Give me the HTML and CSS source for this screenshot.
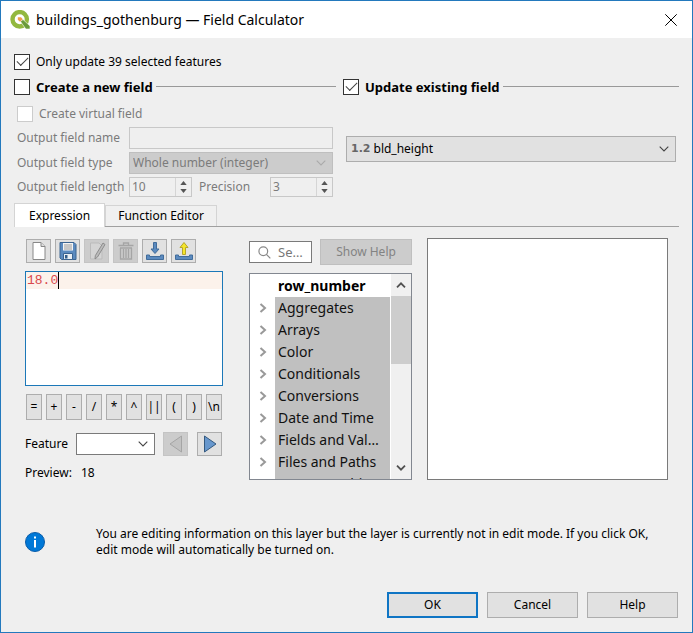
FILE: index.html
```html
<!DOCTYPE html>
<html lang="en">
<head>
<meta charset="utf-8">
<title>buildings_gothenburg — Field Calculator</title>
<link rel="stylesheet" href="styles.css">
</head>
<body>
<svg class="defs" aria-hidden="true">
  <symbol id="chev-down" viewBox="0 0 10 6"><path d="M.7 .7L5 5L9.300 .7" fill="none" stroke="currentColor" stroke-width="1.100"/></symbol>
  <symbol id="chev-right" viewBox="0 0 8 10"><path d="M1.500 1L6 5L1.500 9" fill="none" stroke="currentColor" stroke-width="2"/></symbol>
  <symbol id="spin-up" viewBox="0 0 8 5"><path d="M0 5L4 0L8 5Z" fill="currentColor"/></symbol>
  <symbol id="spin-down" viewBox="0 0 8 5"><path d="M0 0L4 5L8 0Z" fill="currentColor"/></symbol>
</svg>
<main class="dialog">
  <header class="titlebar">
    <svg class="logo" viewBox="0 0 20 20" aria-hidden="true">
      <circle cx="9.700" cy="9.300" r="7.200" fill="none" stroke="#93b83f" stroke-width="4.400"/>
      <path d="M10.500 11.500L13 9.500L20 16V19H15.800Z" fill="#6a9a3a" stroke="#fff" stroke-width=".6"/>
      <path d="M7.800 7.300H11L12.800 9.200L10 11.800L7.800 9.800Z" fill="#efa04a"/>
    </svg>
    <h1 class="title">buildings_gothenburg — Field Calculator</h1>
    <button class="close" type="button" aria-label="Close"><svg viewBox="0 0 12 12"><path d="M.3 .3L11.700 11.700M11.700 .3L.3 11.700" stroke="#000"/></svg></button>
  </header>

  <form class="body">
    <label class="check"><input type="checkbox" checked>Only update 39 selected features</label>

    <div class="groups">
      <section class="group">
        <div class="group-head"><label class="check strong"><input type="checkbox">Create a new field</label></div>
        <div class="group-body fields">
          <label class="check virtual"><input type="checkbox" disabled>Create virtual field</label>
          <label for="name">Output field name</label>
          <input class="text wide" id="name" type="text" disabled>
          <label for="type">Output field type</label>
          <span class="combo off wide"><select id="type" disabled><option>Whole number (integer)</option></select><svg class="arrow"><use href="#chev-down"/></svg></span>
          <label for="length">Output field length</label>
          <span class="spin"><input id="length" type="text" value="10" disabled><span class="steps"><button type="button" disabled aria-label="Increase length"><svg><use href="#spin-up"/></svg></button><button type="button" disabled aria-label="Decrease length"><svg><use href="#spin-down"/></svg></button></span></span>
          <label for="precision">Precision</label>
          <span class="spin"><input id="precision" type="text" value="3" disabled><span class="steps"><button type="button" disabled aria-label="Increase precision"><svg><use href="#spin-up"/></svg></button><button type="button" disabled aria-label="Decrease precision"><svg><use href="#spin-down"/></svg></button></span></span>
        </div>
      </section>
      <section class="group">
        <div class="group-head"><label class="check strong"><input type="checkbox" checked>Update existing field</label></div>
        <div class="group-body existing">
          <span class="combo typed"><span class="tag">1.2</span><select aria-label="Existing field"><option>bld_height</option></select><svg class="arrow"><use href="#chev-down"/></svg></span>
        </div>
      </section>
    </div>

    <div class="tabs" role="tablist">
      <button class="tab active" type="button" role="tab" aria-selected="true">Expression</button>
      <button class="tab" type="button" role="tab" aria-selected="false">Function Editor</button>
    </div>

    <div class="pane">
      <section class="editor">
        <div class="toolbar">
          <button type="button" aria-label="New expression"><svg viewBox="0 0 20 20"><path d="M4 1.500H12L16 5.500V18.500H4Z" fill="#fff" stroke="#888"/><path d="M12 1.500V5.500H16" fill="#ddd" stroke="#888"/></svg></button>
          <button type="button" aria-label="Save expression"><svg viewBox="0 0 20 20"><path d="M2 1.500H16L18 3.500V18.500H3.500L2 17Z" fill="#5b8abf" stroke="#3b6491"/><path d="M5 2H15V9.500H5Z" fill="#f4f4f4"/><path d="M6 4H14M6 6H14M6 8H14" stroke="#999"/><path d="M5.500 12.500H14.500V18.500H5.500Z" fill="#e8edf2" stroke="#3b6491"/><path d="M7 14H9.500V17.500H7Z" fill="#315c8b"/></svg></button>
          <button type="button" disabled aria-label="Edit expression"><svg viewBox="0 0 20 20"><path d="M3.500 2H12L15 5V18H3.500Z" fill="#d4d4d4" stroke="#bbb"/><path d="M16 2L18 3.500L10.500 16L8 18L8.300 14.700Z" fill="#bbb" stroke="#8c8c8c"/></svg></button>
          <button type="button" disabled aria-label="Delete expression"><svg viewBox="0 0 20 20" fill="none" stroke="#a5a5a5" stroke-width="1.300"><path d="M2.500 4.500H17.500M7.500 4V2H12.500V4M4.500 7V18H15.500V7M4 7H16M7.500 8V17M10 8V17M12.500 8V17"/></svg></button>
          <button type="button" aria-label="Import expressions"><svg viewBox="0 0 20 20"><path d="M8.500 1.500H11.500V8H14L10 12.500L6 8H8.500Z" fill="#5b8abf" stroke="#416c9b"/><path d="M1.500 14H4.500V15.500H15.500V14H18.500V18.500H1.500Z" fill="#5b8abf" stroke="#416c9b"/></svg></button>
          <button type="button" aria-label="Export expressions"><svg viewBox="0 0 20 20"><path d="M1.500 14H4.500V15.500H15.500V14H18.500V18.500H1.500Z" fill="#5b8abf" stroke="#416c9b"/><path d="M8.500 13.500H11.500V6.500H14L10 1.500L6 6.500H8.500Z" fill="#f4e52b" stroke="#b4a52b"/></svg></button>
        </div>
        <div class="code" role="textbox" tabindex="0" aria-label="Expression" contenteditable="true" spellcheck="false"><div class="line">18.0<i class="caret"></i></div></div>
        <div class="operators">
          <button type="button">=</button><button type="button">+</button><button type="button">-</button><button type="button">/</button><button type="button">*</button><button type="button">^</button><button type="button">||</button><button type="button">(</button><button type="button">)</button><button type="button">\n</button>
        </div>
        <div class="feature">
          <label for="feature">Feature</label>
          <span class="combo plain"><select id="feature"><option></option></select><svg class="arrow"><use href="#chev-down"/></svg></span>
          <button class="step" type="button" disabled aria-label="Previous feature"><svg viewBox="0 0 14 18"><path d="M12.500 1V17L1 9Z" fill="#c2c2c2" stroke="#a5a5a5"/></svg></button>
          <button class="step next" type="button" aria-label="Next feature"><svg viewBox="0 0 14 18"><path d="M1.500 1V17L13 9Z" fill="#6797cd" stroke="#34597f"/></svg></button>
        </div>
        <p class="preview"><span>Preview:</span><span>18</span></p>
      </section>

      <section class="functions">
        <div class="finder">
          <label class="search"><svg viewBox="0 0 14 14" fill="none" stroke="#888" stroke-width="1.300"><circle cx="5.700" cy="5.700" r="4.700"/><path d="M9 9L13.300 13.300"/></svg><input type="text" placeholder="Search" aria-label="Search"></label>
          <button class="show-help" type="button" disabled>Show Help</button>
        </div>
        <div class="tree">
          <ul class="items">
            <li class="leaf"><span>row_number</span></li>
            <li><svg><use href="#chev-right"/></svg><span>Aggregates</span></li>
            <li><svg><use href="#chev-right"/></svg><span>Arrays</span></li>
            <li><svg><use href="#chev-right"/></svg><span>Color</span></li>
            <li><svg><use href="#chev-right"/></svg><span>Conditionals</span></li>
            <li><svg><use href="#chev-right"/></svg><span>Conversions</span></li>
            <li><svg><use href="#chev-right"/></svg><span>Date and Time</span></li>
            <li><svg><use href="#chev-right"/></svg><span>Fields and Values</span></li>
            <li><svg><use href="#chev-right"/></svg><span>Files and Paths</span></li>
            <li><svg><use href="#chev-right"/></svg><span>Fuzzy Matching</span></li>
          </ul>
          <div class="scroll" aria-hidden="true">
            <svg viewBox="0 0 10 6"><path d="M1 5.300L5 1.300L9 5.300" fill="none" stroke="#505050" stroke-width="1.800"/></svg>
            <div class="track"><div class="thumb"></div></div>
            <svg viewBox="0 0 10 6"><path d="M1 .7L5 4.700L9 .7" fill="none" stroke="#505050" stroke-width="1.800"/></svg>
          </div>
        </div>
      </section>

      <section class="help" aria-label="Function help"></section>
    </div>

    <div class="notice">
      <svg viewBox="0 0 20 20" aria-hidden="true"><circle cx="10" cy="10" r="9.500" fill="#0078d7" stroke="#0a5ca8"/><path d="M9 4.500H11V6.500H9ZM9 8H11V15.500H9Z" fill="#fff"/></svg>
      <p>You are editing information on this layer but the layer is currently not in edit mode. If you click OK, edit mode will automatically be turned on.</p>
    </div>

    <footer class="actions">
      <button class="primary" type="button">OK</button>
      <button type="button">Cancel</button>
      <button type="button">Help</button>
    </footer>
  </form>
</main>
</body>
</html>
```
FILE: styles.css
```css
* { box-sizing: border-box; }
body { margin: 0; font: 12px/16px "Noto Sans", sans-serif; color: #000; }
button, input, select { font: inherit; color: inherit; margin: 0; padding: 0; border-radius: 0; }
h1, p, ul { margin: 0; padding: 0; font-weight: normal; }
svg { display: block; flex: none; }
.defs { position: absolute; width: 0; height: 0; }

.dialog { display: flex; flex-direction: column; min-height: 100vh; border: 1px solid #2379bd; background: #efefef; }
.titlebar { display: flex; align-items: center; height: 37px; padding: 0 14px 0 9px; background: #fff; }
.logo { width: 20px; height: 20px; }
.title { flex: 1; margin-left: 6px; font-size: 14px; line-height: 20px; }
.close { width: 14px; height: 14px; padding: 1px; border: 0; background: none; }
.close svg { width: 12px; height: 12px; }

.body { flex: 1; display: flex; flex-direction: column; padding: 15px 13px 14px; }
.check { display: flex; align-items: center; gap: 6px; height: 17px; white-space: nowrap; }
.check input { appearance: none; width: 16px; height: 16px; border: 1px solid #333; background: #fff; display: grid; place-items: center; }
.check input:checked::after { content: ""; width: 10px; height: 5px; margin-bottom: 3px; border: solid #444; border-width: 0 0 1px 1px; transform: rotate(-45deg); }
.check input:disabled { border-color: #ccc; }
.strong { font-size: 13px; font-weight: bold; }

.groups { display: grid; grid-template-columns: 322fr 336fr; gap: 7px; margin-top: 8px; }
.group-head { display: flex; align-items: center; gap: 3px; }
.group-head::after { content: ""; flex: 1; height: 1px; background: #999; }
.group-body { padding: 10px 3px 0; }
.fields { display: grid; grid-template-columns: 112px 63px 78px 1fr; row-gap: 3px; align-items: center; color: #7b7b7b; }
.fields .virtual { grid-column: 1 / -1; margin-bottom: 2px; }
.fields .wide { grid-column: 2 / -1; }
.fields label[for="precision"] { padding-left: 7px; }
.text { height: 22px; border: 1px solid #c8c8c8; background: #efefef; min-width: 0; }
.combo { position: relative; display: flex; align-items: center; height: 22px; border: 1px solid #adadad; background: #e1e1e1; }
.combo select { appearance: none; width: 100%; height: 100%; padding: 0 22px 0 3px; border: 0; background: none; opacity: 1; }
.combo .arrow { position: absolute; right: 6px; width: 10px; height: 6px; pointer-events: none; color: #444; }
.combo.off { background: #ccc; border-color: #bfbfbf; }
.combo.off .arrow { color: #aaa; }
.combo.plain { background: #fff; border-color: #7a7a7a; }
.spin { display: flex; height: 20px; border: 1px solid #c8c8c8; }
.spin input { flex: 1; width: 0; padding-left: 2px; border: 0; background: none; }
.steps { display: flex; flex-direction: column; justify-content: center; gap: 4px; width: 16px; border-left: 1px solid #d5d5d5; color: #555; }
.steps button { display: flex; justify-content: center; border: 0; background: none; }
.steps svg { width: 7px; height: 4px; }
.existing { padding-top: 41px; }
.typed { height: 26px; }
.typed .tag { padding-left: 4px; font: bold 11px/16px "DejaVu Sans", sans-serif; color: #666; }

.tabs { display: flex; align-items: flex-end; margin-top: 6px; border-bottom: 1px solid #a0a0a0; }
.tab { height: 21px; padding: 0 12px; border: 1px solid #d4d4d4; border-bottom: 0; background: #f0f0f0; }
.tab.active { height: 24px; padding: 0 14px; margin-bottom: -1px; background: #fff; }

.pane { display: grid; grid-template-columns: 198px 189px 1fr; padding: 11px 11px 0; }
.editor { min-width: 0; }
.functions { margin: 1px 0 0 26px; }
.help { margin-left: 15px; border: 1px solid #7a7a7a; background: #fff; height: 242px; }
.toolbar { display: flex; gap: 4px; padding: 1px 0 0 1px; }
.toolbar button { display: grid; place-items: center; width: 25px; height: 24px; border: 1px solid #adadad; background: #e1e1e1; }
.toolbar button:disabled, .step:disabled { background: #ccc; border-color: #c4c4c4; }
.toolbar svg { width: 20px; height: 20px; }
.code { height: 115px; margin-top: 8px; border: 1px solid #1c78b8; background: #fff; outline: 0; font: 13px/17px "Liberation Mono", monospace; color: #d9484d; }
.line { display: flex; padding-left: 1px; background: #fcf2eb; }
.caret { width: 1px; background: #000; }
.operators { display: flex; justify-content: space-between; margin: 8px 1px 0; }
.operators button { display: flex; justify-content: center; align-items: center; width: 16px; height: 26px; border: 1px solid #adadad; background: #e1e1e1; overflow: hidden; }
.feature { display: flex; align-items: center; margin: 12px 1px 0 0; }
.feature label { width: 51px; }
.feature .combo { width: 79px; }
.step { display: grid; place-items: center; width: 25px; height: 24px; margin-left: 8px; border: 1px solid #adadad; background: #e1e1e1; }
.next { margin-left: 9px; }
.step svg { width: 14px; height: 18px; }
.preview { display: flex; gap: 9px; margin-top: 9px; }

.finder { display: flex; gap: 8px; align-items: center; }
.search { display: flex; align-items: center; width: 63px; height: 22px; padding: 0 6px 0 8px; gap: 7px; border: 1px solid #7a7a7a; background: #fff; }
.search svg { width: 13px; height: 13px; }
.search input { flex: 1; width: 0; border: 0; background: none; text-overflow: ellipsis; font-size: 13px; }
.search input::placeholder { color: #777; }
.show-help { flex: 1; height: 26px; border: 1px solid #bfbfbf; background: #ccc; color: #838383; }
.tree { display: flex; height: 207px; margin-top: 8px; border: 1px solid #828790; background: #fff; overflow: hidden; font-size: 14px; line-height: 22px; }
.items { flex: 1; min-width: 0; padding-top: 1px; list-style: none; }
.items li { display: flex; align-items: center; height: 22px; color: #111; }
.items svg { width: 8px; height: 10px; margin-left: 9px; color: #999; }
.items span { flex: 1; min-width: 0; margin-left: 8px; padding: 0 8px 0 3px; background: #c0c0c0; overflow: hidden; text-overflow: ellipsis; white-space: nowrap; }
.items .leaf span { margin-left: 25px; padding-right: 0; background: none; color: #000; font-weight: bold; }
.scroll { display: flex; flex-direction: column; align-items: center; width: 20px; margin-left: 1px; background: #f0f0f0; }
.scroll svg { width: 10px; height: 6px; margin: 8px 0; }
.track { flex: 1; width: 100%; }
.thumb { height: 42%; background: #cdcdcd; }

.notice { display: flex; align-items: center; gap: 51px; margin: 45px 11px 0; }
.notice svg { width: 20px; height: 20px; }
.actions { display: flex; justify-content: flex-end; gap: 9px; margin-top: auto; padding-right: 1px; }
.actions button { width: 91px; height: 26px; border: 1px solid #adadad; background: #e1e1e1; }
.actions .primary { border: 2px solid #0f75c4; }
```
